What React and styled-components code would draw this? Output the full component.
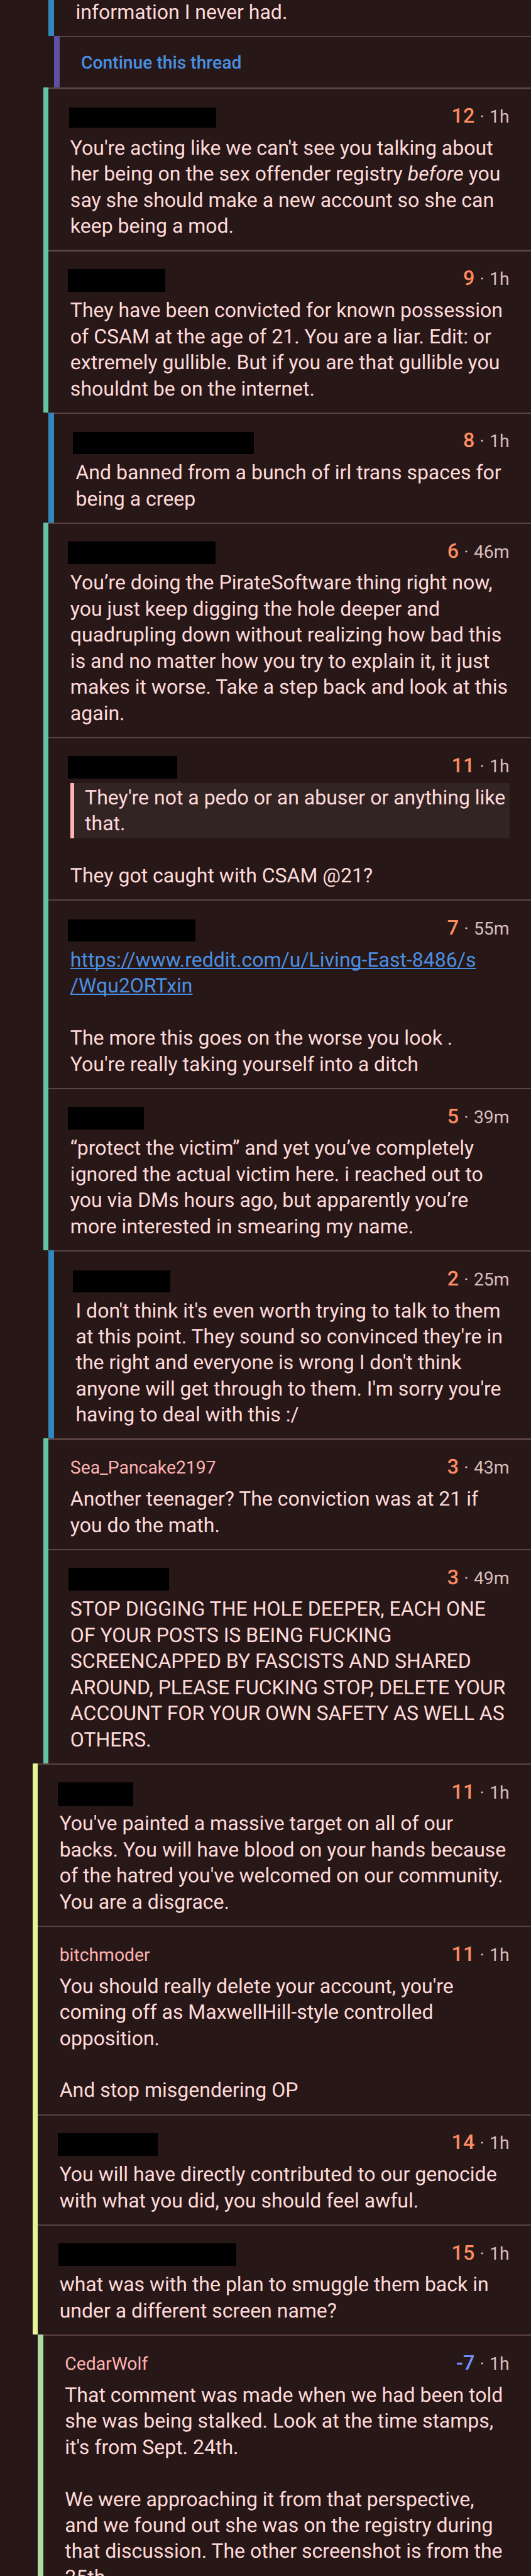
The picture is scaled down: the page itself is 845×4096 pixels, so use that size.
import React from 'react'
import styled, { createGlobalStyle } from 'styled-components'

const SCALE = 845 / 1080
const px = n => `${(n * SCALE).toFixed(3)}px`

const COLORS = {
  background: '#271717',
  divider: '#5b4243',
  text: '#ffdad9',
  muted: '#d8bebd',
  author: '#ffb3b2',
  upvoted: '#ff8b60',
  downvoted: '#7193ff',
  link: '#4a90e2',
  quote: '#322423'
}

// one colour for each level of nesting
const DEPTH_COLORS = {
  6: '#e6f598',
  7: '#abdda4',
  8: '#66c2a5',
  9: '#3288bd',
  10: '#5e4fa2'
}

const GlobalStyle = createGlobalStyle`
  body {
    margin: 0;
    background: ${COLORS.background};
  }
`

const Page = styled.main`
  width: 845px;
  height: 4096px;
  overflow: hidden;
  background: ${COLORS.background};
  color: ${COLORS.text};
  font-family: Roboto, sans-serif;
  font-size: ${px(40.92)};
  line-height: ${px(53)};
  text-rendering: geometricPrecision;
`

const Row = styled.article`
  display: flex;
  padding-left: ${({ $depth }) => px($depth * 11)};
`

const DepthBar = styled.div`
  flex: none;
  width: ${px(11)};
  background: ${({ $depth }) => DEPTH_COLORS[$depth]};
`

const Content = styled.div`
  flex: 1;
  min-width: 0;
`

const Divider = styled.div`
  height: ${px(3)};
  background: ${COLORS.divider};
`

const Header = styled.header`
  display: flex;
  align-items: baseline;
  justify-content: space-between;
  height: ${px(53)};
  padding: ${px(28.8)} ${px(44)} ${px(11.2)};
`

const Author = styled.span`
  color: ${COLORS.author};
  font-size: ${px(36.2)};
`

const Redacted = styled.span`
  align-self: flex-start;
  width: ${({ $width }) => px($width)};
  height: ${({ $height }) => px($height)};
  margin-top: ${({ $top }) => px($top - 31.8)};
  margin-left: ${({ $shift }) => px(-$shift)};
  background: #000;
`

const Meta = styled.span`
  color: ${COLORS.muted};
  font-size: ${px(36.2)};
  white-space: pre;
  word-spacing: ${px(1.5)};
`

const Score = styled.span`
  color: ${({ $negative }) => ($negative ? COLORS.downvoted : COLORS.upvoted)};
  font-size: ${px(41.25)};
  font-weight: 500;
`

const Body = styled.div`
  padding: ${px(0.8)} 0 ${px(21.2)} ${px(44)};
  white-space: pre;
`

const Clipped = styled(Body)`
  margin-top: ${px(-2)};
`

const Quote = styled.blockquote`
  margin: ${px(-3)} ${px(44)} ${px(-3)} 0;
  padding: ${px(3)} 0 ${px(3)} ${px(22)};
  border-left: 6px solid ${COLORS.author};
  background: ${COLORS.quote};
`

const Link = styled.a`
  color: ${COLORS.link};
  text-decoration: underline;
  text-decoration-thickness: 2px;
  text-decoration-skip-ink: none;
  text-underline-offset: 2px;
`

const Continue = styled.a`
  display: block;
  height: ${px(102)};
  padding-left: ${px(44)};
  color: ${COLORS.link};
  font-size: ${px(36.1)};
  font-weight: 500;
  line-height: ${px(104.5)};
`

const COMMENTS = [
  {
    depth: 8, score: 12, age: '1h', mask: [3, 41, 300, 40],
    body: (
      <>
        {`You're acting like we can't see you talking about
her being on the sex offender registry `}<em>before</em>{` you
say she should make a new account so she can
keep being a mod.`}
      </>
    )
  },
  {
    depth: 8, score: 9, age: '1h', mask: [5, 39, 198, 46],
    body: `They have been convicted for known possession
of CSAM at the age of 21. You are a liar. Edit: or
extremely gullible. But if you are that gullible you
shouldnt be on the internet.`
  },
  {
    depth: 9, score: 8, age: '1h', mask: [6, 40, 368, 45],
    body: `And banned from a bunch of irl trans spaces for
being a creep`
  },
  {
    depth: 8, score: 6, age: '46m', mask: [5, 38, 301, 47],
    body: `You’re doing the PirateSoftware thing right now,
you just keep digging the hole deeper and
quadrupling down without realizing how bad this
is and no matter how you try to explain it, it just
makes it worse. Take a step back and look at this
again.`
  },
  {
    depth: 8, score: 11, age: '1h', mask: [5, 39, 223, 45],
    body: (
      <>
        <Quote>{`They're not a pedo or an abuser or anything like
that.`}</Quote>
        {`
They got caught with CSAM @21?`}
      </>
    )
  },
  {
    depth: 8, score: 7, age: '55m', mask: [5, 41, 260, 44],
    body: (
      <>
        <Link>{`https://www.reddit.com/u/Living-East-8486/s
/Wqu2ORTxin`}</Link>
        {`

The more this goes on the worse you look .
You're really taking yourself into a ditch`}
      </>
    )
  },
  {
    depth: 8, score: 5, age: '39m', mask: [5, 39, 155, 46],
    body: `“protect the victim” and yet you’ve completely
ignored the actual victim here. i reached out to
you via DMs hours ago, but apparently you’re
more interested in smearing my name.`
  },
  {
    depth: 9, score: 2, age: '25m', mask: [6, 41, 199, 45],
    body: `I don't think it's even worth trying to talk to them
at this point. They sound so convinced they're in
the right and everyone is wrong I don't think
anyone will get through to them. I'm sorry you're
having to deal with this :/`
  },
  {
    depth: 8, score: 3, age: '43m', author: 'Sea_Pancake2197',
    body: `Another teenager? The conviction was at 21 if
you do the math.`
  },
  {
    depth: 8, score: 3, age: '49m', mask: [4, 39, 205, 46],
    body: `STOP DIGGING THE HOLE DEEPER, EACH ONE
OF YOUR POSTS IS BEING FUCKING
SCREENCAPPED BY FASCISTS AND SHARED
AROUND, PLEASE FUCKING STOP, DELETE YOUR
ACCOUNT FOR YOUR OWN SAFETY AS WELL AS
OTHERS.`
  },
  {
    depth: 6, score: 11, age: '1h', mask: [4, 39, 154, 48],
    body: `You've painted a massive target on all of our
backs. You will have blood on your hands because
of the hatred you've welcomed on our community.
You are a disgrace.`
  },
  {
    depth: 6, score: 11, age: '1h', author: 'bitchmoder',
    body: `You should really delete your account, you're
coming off as MaxwellHill-style controlled
opposition.

And stop misgendering OP`
  },
  {
    depth: 6, score: 14, age: '1h', mask: [4, 39, 204, 46],
    body: `You will have directly contributed to our genocide
with what you did, you should feel awful.`
  },
  {
    depth: 6, score: 15, age: '1h', mask: [2, 39, 361, 46],
    body: `what was with the plan to smuggle them back in
under a different screen name?`
  },
  {
    depth: 7, score: -7, age: '1h', author: 'CedarWolf',
    body: `That comment was made when we had been told
she was being stalked. Look at the time stamps,
it's from Sept. 24th.

We were approaching it from that perspective,
and we found out she was on the registry during
that discussion. The other screenshot is from the
25th.`
  }
]

const Mask = ({ mask: [shift, top, width, height] }) => (
  <Redacted $shift={shift} $top={top} $width={width} $height={height} />
)

const Comment = ({ depth, author, mask, score, age, body }) => (
  <Row $depth={depth}>
    <DepthBar $depth={depth} />
    <Content>
      <Divider />
      <Header>
        {author ? <Author>{author}</Author> : <Mask mask={mask} />}
        <Meta>
          <Score $negative={score < 0}>{score}</Score> · {age}
        </Meta>
      </Header>
      <Body>{body}</Body>
    </Content>
  </Row>
)

const App = () => (
  <Page>
    <GlobalStyle />
    <Row $depth={9}>
      <DepthBar $depth={9} />
      <Content>
        <Clipped>information I never had.</Clipped>
      </Content>
    </Row>
    <Row $depth={10}>
      <DepthBar $depth={10} />
      <Content>
        <Divider />
        <Continue>Continue this thread</Continue>
      </Content>
    </Row>
    {COMMENTS.map((comment, i) => (
      <Comment key={i} {...comment} />
    ))}
  </Page>
)

export default App
